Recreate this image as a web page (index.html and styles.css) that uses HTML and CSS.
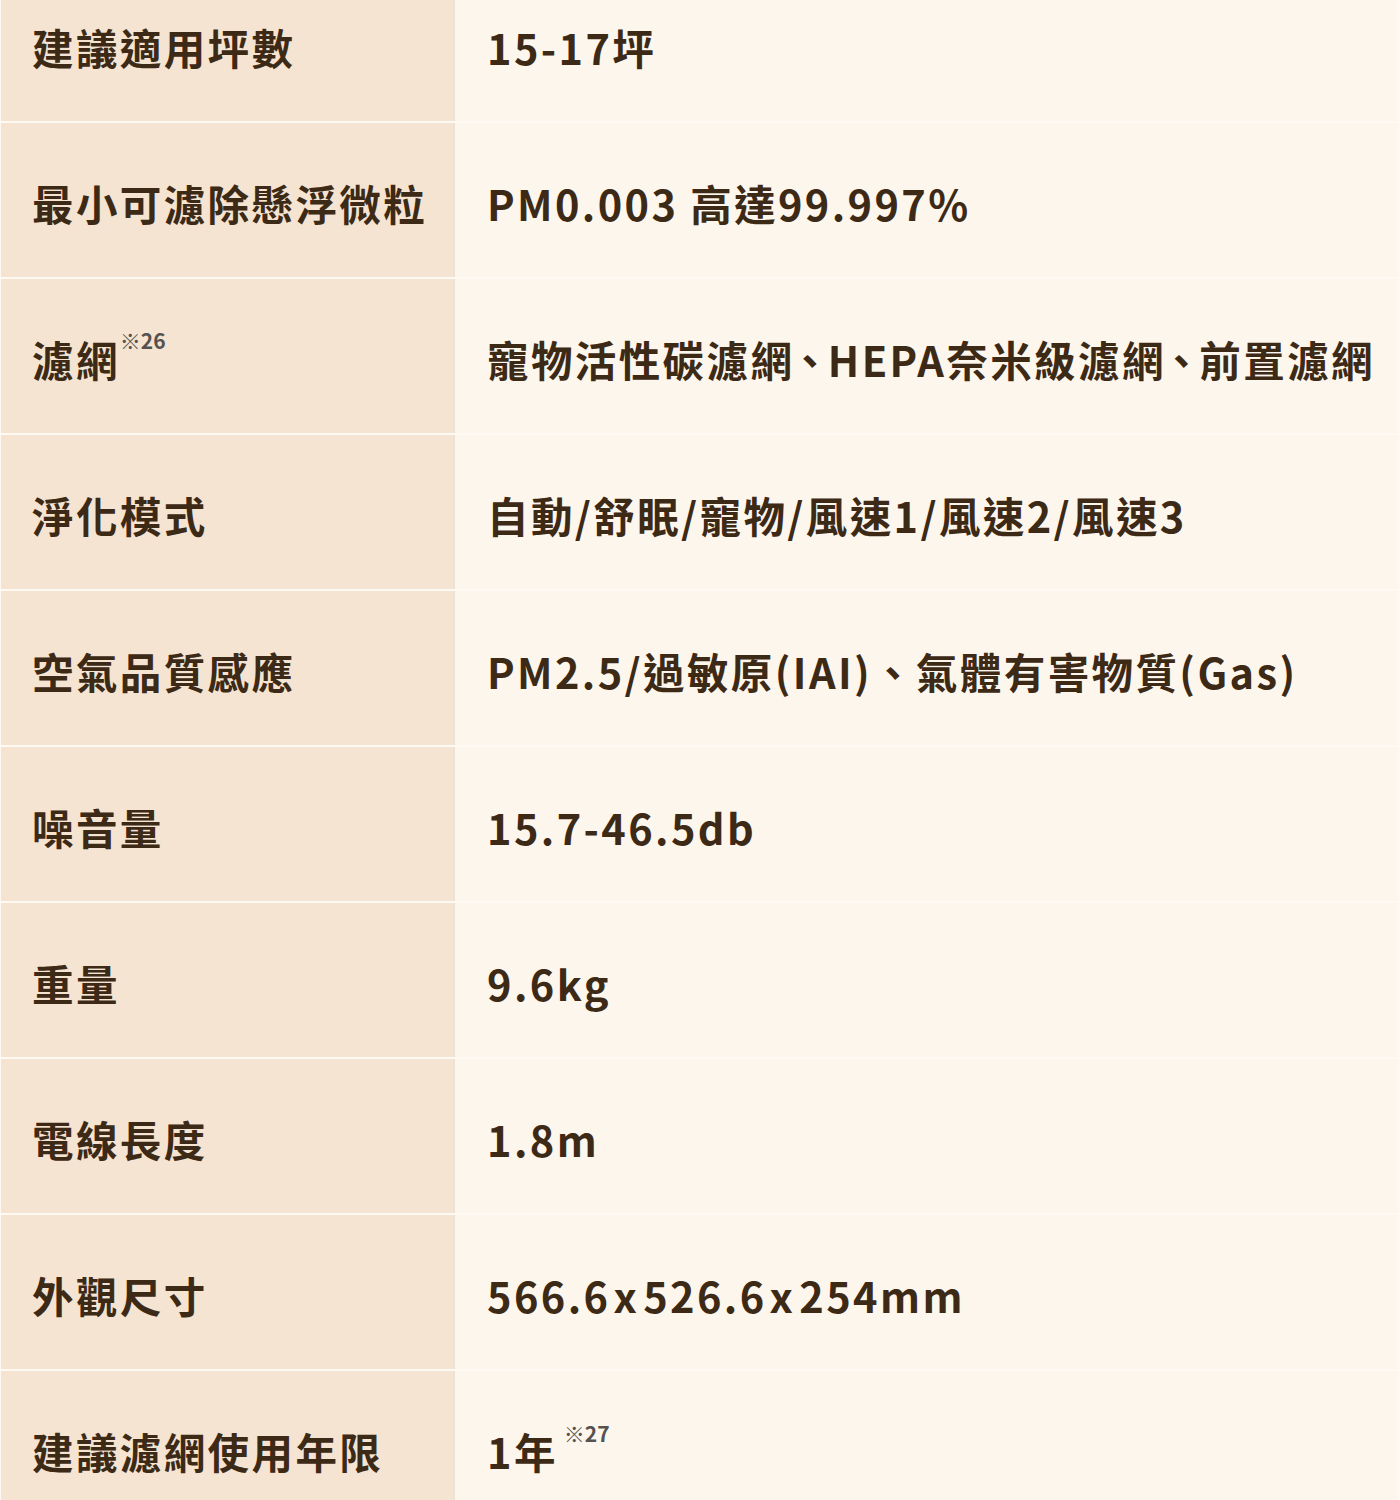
FILE: index.html
```html
<!DOCTYPE html>
<html lang="zh-Hant">
<head>
<meta charset="utf-8">
<link rel="stylesheet" href="styles.css">
</head>
<body>
<div class="spec">
  <div class="row"><div class="k">建議適用坪數</div><div class="v">15-17坪</div></div>
  <div class="row"><div class="k">最小可濾除懸浮微粒</div><div class="v">PM0.003 高達99.997%</div></div>
  <div class="row"><div class="k">濾網<sup class="note">※26</sup></div><div class="v">寵物活性碳濾<span class="pre">網</span><span class="dun">、</span>HEPA奈米級濾<span class="pre">網</span><span class="dun">、</span>前置濾網</div></div>
  <div class="row"><div class="k">淨化模式</div><div class="v">自動/舒眠/寵物/風速1/風速2/風速3</div></div>
  <div class="row"><div class="k">空氣品質感應</div><div class="v">PM2.5/過敏原(IAI)、氣體有害物質(Gas)</div></div>
  <div class="row"><div class="k">噪音量</div><div class="v">15.7-46.5db</div></div>
  <div class="row"><div class="k">重量</div><div class="v">9.6kg</div></div>
  <div class="row"><div class="k">電線長度</div><div class="v">1.8m</div></div>
  <div class="row"><div class="k">外觀尺寸</div><div class="v">566.6<span class="times">x</span>526.6<span class="times">x</span>254mm</div></div>
  <div class="row"><div class="k">建議濾網使用年限</div><div class="v">1年<sup class="note note-gap">※27</sup></div></div>
</div>
</body>
</html>
```
FILE: styles.css
```css
html, body {
  margin: 0;
  padding: 0;
  background: #fdf8f1;
}
.spec {
  width: 1400px;
  margin-top: -33px;
  display: flex;
  flex-direction: column;
  gap: 2px;
  background: #fef9f2;
  padding-left: 1px;
  padding-right: 2px;
  box-sizing: border-box;
}
.row {
  display: grid;
  grid-template-columns: 452px 1fr;
  gap: 2px;
  height: 154px;
  background: #ece3d8;
}
.k, .v {
  font-family: "Noto Sans CJK TC", "Noto Sans", sans-serif;
  font-weight: 700;
  font-size: 41.5px;
  letter-spacing: 2.4px;
  color: #3d2a16;
  line-height: 1;
  padding-top: 60px;
  box-sizing: border-box;
  white-space: nowrap;
}
.k {
  background: #f4e4d1;
  padding-left: 31px;
}
.v {
  background: #fdf6ec;
  padding-left: 32px;
}
.pre {
  letter-spacing: -3px;
}
.dun {
  letter-spacing: -2.6px;
}
.times {
  padding: 0 4px 0 3px;
}
.note {
  font-size: 21px;
  letter-spacing: 0;
  color: #55524f;
  vertical-align: 0;
  position: relative;
  top: -28px;
  margin-left: 0;
}
.note-gap {
  margin-left: 6px;
  top: -27px;
}
```
